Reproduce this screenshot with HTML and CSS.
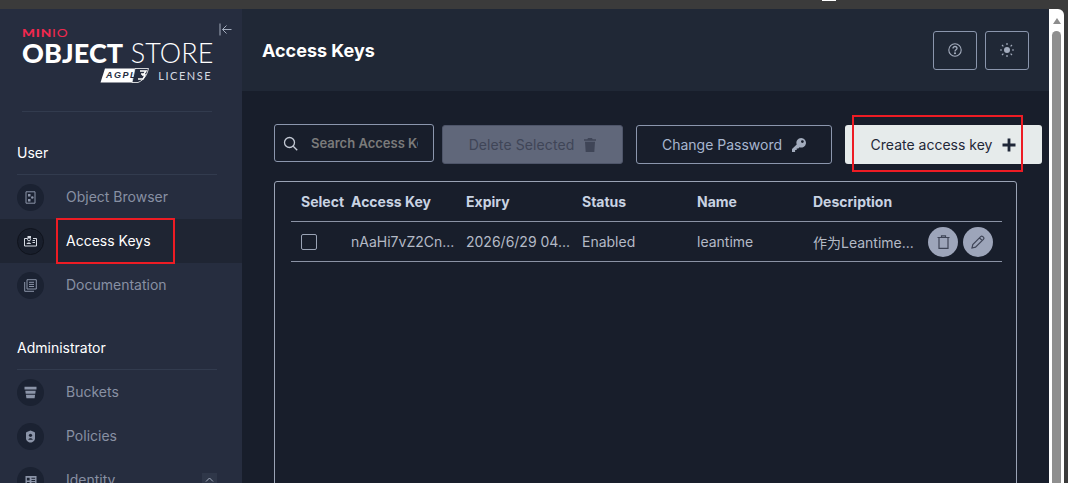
FILE: index.html
```html
<!DOCTYPE html>
<html lang="en">
<head>
<meta charset="utf-8">
<title>Access Keys</title>
<link rel="stylesheet" href="styles.css">
</head>
<body>
<div class="topstrip"><span class="tab-mark"></span></div>
<div class="window">
  <div class="app">
    <aside class="sidebar">
      <div class="brand">
        <svg class="collapse" width="13" height="13" viewBox="0 0 13 13" fill="none" stroke="#a3acbd" stroke-width="1"><path d="M1 .5v12M12.500 6.500H3.500M7.500 2.500l-4 4 4 4"/></svg>
        <div class="minio"><b>MIN</b><span>IO</span></div>
        <div class="product"><b>OBJECT</b> STORE</div>
        <div class="license">
          <svg class="agpl" width="49" height="15" viewBox="0 0 49 15">
            <path d="M5 .5H35L32 14.500H.5Z" fill="#fff"/>
            <path d="M35 .5H48.500C47 7 44 12 38 14.500H32Z" fill="#262d3f" stroke="#fff" stroke-width=".8"/>
            <text x="6" y="10" class="agpl-text">AGPL</text>
            <path d="M40 3h6l-2 3h-3M42 7h3l-2 4h-5" fill="none" stroke="#fff" stroke-width="1.500"/>
          </svg>
          <span>LICENSE</span>
        </div>
      </div>

      <div class="section-title">User</div>
      <nav class="menu">
        <a class="item">
          <span class="disc"><svg width="13" height="13" viewBox="0 0 13 13" fill="none"><path d="M2 .8h9v11.400H2z" stroke="#8b94a8"/><rect x="4" y="3" width="2.500" height="2.500" fill="#8b94a8"/><circle cx="8.300" cy="6.500" r="1.300" fill="#8b94a8"/><rect x="4" y="8" width="2.500" height="2.500" fill="#8b94a8"/></svg></span>
          <span class="label">Object Browser</span>
        </a>
        <a class="item active">
          <span class="disc"><svg width="13" height="12" viewBox="0 0 13 12" fill="none"><path d="M.5 3.500h3M9 3.500h3.500v7.500H.5V3.500" stroke="#d5dae3"/><circle cx="5" cy="4.300" r="1.500" stroke="#d5dae3"/><rect x="3.500" y="1" width="3.500" height="2" fill="#d5dae3"/><path d="M2.500 9c.2-2 4.300-2 4.500 0z" fill="#d5dae3"/><path d="M8.500 5.500h2.500M8.500 7.500h2.500" stroke="#d5dae3"/></svg></span>
          <span class="label">Access Keys</span>
        </a>
        <a class="item">
          <span class="disc"><svg width="13" height="13" viewBox="0 0 13 13" fill="none" stroke="#8b94a8"><path d="M3 .7h9.300v9.300H3zM.7 3v9.300H10M5 3.300h5M5 5.400h5M5 7.500h5"/></svg></span>
          <span class="label">Documentation</span>
        </a>
      </nav>

      <div class="section-title admin">Administrator</div>
      <nav class="menu">
        <a class="item">
          <span class="disc"><svg width="13" height="13" viewBox="0 0 13 13" fill="#8b94a8"><path d="M.5.800h12v2.700H.5zM1.300 4.700h10.400l-.4 3H1.700zM1.900 8.800h9.200l-.5 3.400H2.400z"/></svg></span>
          <span class="label">Buckets</span>
        </a>
        <a class="item">
          <span class="disc"><svg width="11" height="13" viewBox="0 0 11 13"><path d="M3 1.500l2.500-1 2.500 1 2 1v6c0 2.300-2.400 4-4.500 4S1 10.800 1 8.500v-6z" fill="#8b94a8"/><circle cx="5.500" cy="5.300" r="1.600" fill="#1b2232"/><path d="M3.300 9.800c.3-2 4.100-2 4.400 0z" fill="#1b2232"/></svg></span>
          <span class="label">Policies</span>
        </a>
        <a class="item">
          <span class="disc"><svg width="12" height="11" viewBox="0 0 13 12" fill="#8b94a8"><path d="M.5 1h12v11H.5zM2 6h3V3H2zm5-3v1.200h4V3zm0 2.400v1.200h4V5.400zM2 7.500V10h3V7.500zm5 .4V10h4V7.900z" fill-rule="evenodd"/></svg></span>
          <span class="label grow">Identity</span>
          <span class="caret"><svg width="9" height="5" viewBox="0 0 9 5" fill="none" stroke="#a3acbd"><path d="M1 4.500l3.500-3.500 3.500 3.500"/></svg></span>
        </a>
      </nav>
    </aside>

    <main class="main">
      <header class="page-header">
        <h1>Access Keys</h1>
        <div class="header-actions">
          <button class="icon-btn"><svg width="14" height="14" viewBox="0 0 14 14" fill="none" stroke="#a3acbd" stroke-width="1.100"><circle cx="7" cy="7" r="6.200"/><path d="M5 5.400C5 2.800 9 3 9 5.300c0 1.500-2 1.600-2 3.200" stroke-width="1.300"/><circle cx="7" cy="10.300" r=".5" fill="#a3acbd"/></svg></button>
          <button class="icon-btn"><svg width="14" height="14" viewBox="0 0 14 14" fill="#a3acbd" stroke="#a3acbd"><circle cx="7" cy="7" r="3" stroke="none"/><path d="M7 0v2M7 12v2M0 7h2M12 7h2M2 2l1.400 1.400M10.600 10.600L12 12M2 12l1.400-1.400M10.600 3.400L12 2" stroke-width="1.200"/></svg></button>
        </div>
      </header>

      <section class="content">
        <div class="toolbar">
          <label class="search">
            <svg width="15" height="15" viewBox="0 0 15 15" fill="none" stroke="#c3c9d4" stroke-width="1.300"><circle cx="6.500" cy="6.500" r="5"/><path d="M10.200 10.200l4 4"/></svg>
            <input type="text" placeholder="Search Access Keys">
          </label>
          <button class="btn btn-disabled">Delete Selected
            <svg width="12" height="14" viewBox="0 0 12 14" fill="#3f4557"><path d="M4 0h4l.6 1.200H12v1.500H0V1.200h3.400zM1 3.700h10l-.7 10.300H1.700z"/></svg>
          </button>
          <button class="btn btn-outline">Change Password
            <svg width="14" height="14" viewBox="0 0 14 14" fill="#a3acbd"><path d="M9.200 0a4.800 4.800 0 1 1-1.700 9.300L6.300 10.500H4.700v1.600H3.100V14H0v-2.900l4.700-4.600A4.800 4.800 0 0 1 9.200 0zm1.200 2.200a1.400 1.400 0 1 0 0 2.800 1.400 1.400 0 0 0 0-2.800z" fill-rule="evenodd"/></svg>
          </button>
          <button class="btn btn-primary">Create access key
            <svg width="14" height="14" viewBox="0 0 14 14" stroke="#1f2738" stroke-width="2.800"><path d="M7 .5v13M.5 7h13"/></svg>
          </button>
        </div>

        <div class="table-box">
          <div class="row head">
            <div>Select</div><div>Access Key</div><div>Expiry</div><div>Status</div><div>Name</div><div>Description</div>
          </div>
          <div class="row body">
            <div><span class="check"></span></div>
            <div>nAaHi7vZ2Cn...</div>
            <div>2026/6/29 04...</div>
            <div>Enabled</div>
            <div>leantime</div>
            <div>作为Leantime...</div>
            <div class="actions">
              <button class="round"><svg width="13" height="14" viewBox="0 0 13 14" fill="none" stroke="#3f4557" stroke-width="1.200"><path d="M.5 2.500h12M4.500 2.500V.8h4v1.700M2 2.500v10.800h9V2.500"/></svg></button>
              <button class="round"><svg width="14" height="14" viewBox="0 0 14 14" fill="none" stroke="#3f4557" stroke-width="1.200"><path d="M1 13l.8-3.500L9.700 1.600a1.500 1.500 0 0 1 2.100 0l.6.600a1.500 1.500 0 0 1 0 2.100L4.500 12.200zM8.500 2.800l2.700 2.700"/></svg></button>
            </div>
          </div>
        </div>
      </section>
    </main>
  </div>
  <div class="scrollbar"><span class="arrow"></span><span class="thumb"></span></div>
</div>
<div class="callout callout-menu"></div>
<div class="callout callout-create"></div>
</body>
</html>
```
FILE: styles.css
```css
* { box-sizing: border-box; }
html, body { height: 100%; }
body {
  margin: 0;
  background: #3b3b3b;
  font-family: "Inter", "Noto Sans CJK SC", sans-serif;
  font-size: 14px;
  overflow: hidden;
  position: relative;
}
.topstrip { height: 9px; background: #3b3b3b; }
.tab-mark { display: block; width: 14px; height: 1px; margin-left: 822px; background: #fff; }
.window { display: flex; height: 474px; padding-right: 4px; overflow: hidden; }
.app { display: flex; width: 1049px; overflow: hidden; }

.sidebar { width: 242px; flex: none; background: #262d3f; color: #fff; }
.brand {
  position: relative;
  height: 103px;
  margin: 0 30px 0 22px;
  padding-top: 20px;
  border-bottom: 1px solid #323b4e;
}
.collapse { position: absolute; left: 197px; top: 14px; }
.minio { font-family: "Lato", sans-serif; font-size: 10.500px; line-height: 9px; letter-spacing: .6px; color: #f0294f; transform-origin: left; transform: scaleX(1.300); }
.minio b { font-weight: 900; }
.minio span { font-weight: 400; }
.product { font-family: "Lato", sans-serif; font-size: 27px; line-height: 24px; margin-top: 3px; white-space: nowrap; font-weight: 300; letter-spacing: .1px; }
.product b { font-weight: 900; }
.license { display: flex; align-items: center; justify-content: flex-end; gap: 9px; margin-top: 3px; font-family: "Lato", sans-serif; font-size: 11px; letter-spacing: 1.500px; color: #d6dae2; }
.agpl-text { font: italic 900 9px "Liberation Sans", sans-serif; fill: #262d3f; }

.section-title { margin: 31px 25px 0 17px; padding-bottom: 12px; line-height: 20px; height: 32px; border-bottom: 1px solid #323b4e; font-weight: 400; }
.section-title.admin { margin-top: 31px; }
.menu { display: flex; flex-direction: column; }
.item { display: flex; align-items: center; height: 44px; padding: 0 25px 0 17px; color: #8890a3; }
.item .label { margin-top: -2px; }
.item .grow { flex: 1; }
.item.active { background: #1f2533; color: #fff; }
.disc { width: 27px; height: 27px; flex: none; margin-right: 22px; border-radius: 50%; background: #1b2232; display: flex; align-items: center; justify-content: center; }
.item.active .disc { background: #181e2b; border: 1px solid #0f131c; }
.caret { width: 15px; height: 15px; background: #2f3749; display: flex; align-items: flex-start; justify-content: center; padding-top: 4px; }

.main { flex: 1; min-width: 0; background: #181e2b; }
.page-header { height: 82px; background: #202836; display: flex; align-items: center; justify-content: space-between; padding: 0 20px 0 20px; }
h1 { margin: 0; font-size: 18px; line-height: 24px; font-weight: 700; color: #fff; position: relative; top: 1px; }
.header-actions { display: flex; gap: 8px; }
button { font: inherit; padding: 0; cursor: pointer; }
.icon-btn { width: 44px; height: 39px; background: transparent; border: 1px solid #8b96ad; border-radius: 3px; display: flex; align-items: center; justify-content: center; }

.content { padding: 33px 7px 0 32px; }
.toolbar { display: flex; align-items: flex-start; }
.search { width: 160px; height: 38px; border: 1px solid #8b96ad; border-radius: 3px; display: flex; align-items: center; padding: 0 15px 0 8px; gap: 13px; }
.search svg { flex: none; }
.search input { flex: 1; min-width: 0; width: 0; background: transparent; border: 0; outline: 0; padding: 0; font: 600 13px "Inter", sans-serif; color: #ccc; }
.search input::placeholder { color: #7b7b7b; opacity: 1; }
.btn { height: 39px; margin-top: 1px; display: flex; align-items: center; justify-content: center; gap: 10px; border-radius: 3px; border: 1px solid transparent; }
.btn-disabled { width: 181px; margin-left: 8px; background: #60677a; border-color: #4e5569; color: #3f4557; letter-spacing: .1px; }
.btn-outline { width: 196px; margin-left: 13px; background: transparent; border-color: #8b96ad; color: #a7b6d0; }
.btn-primary { width: 197px; margin-left: 13px; background: #e6ebeb; color: #1f2738; }

.table-box { margin-top: 17px; width: 743px; height: 400px; border: 1px solid #9aa3b5; border-radius: 3px; padding: 0 14px 0 16px; }
.row { display: grid; grid-template-columns: 50px 115px 116px 115px 116px 115px 1fr; align-items: center; height: 40px; padding-left: 10px; border-bottom: 1px solid #8b93a5; white-space: nowrap; }
.head { font-weight: 700; color: #c9d3e2; }
.body { color: #b4bac6; }
.check { display: block; width: 16px; height: 16px; border: 1px solid #9aa3b5; border-radius: 2px; }
.actions { display: flex; gap: 5px; }
.round { width: 30px; height: 30px; flex: none; border: 0; border-radius: 50%; background: #9da5ba; display: flex; align-items: center; justify-content: center; }

.scrollbar { width: 15px; flex: none; background: #fff; border-top-right-radius: 6px; padding: 0 3px; display: flex; flex-direction: column; align-items: center; }
.arrow { margin-top: 9px; border: 4.500px solid transparent; border-top: 0; border-bottom: 6px solid #8c8c8c; }
.thumb { display: block; width: 9px; flex: 1; margin-top: 7px; border-radius: 5px 5px 0 0; background: #8f8f8f; }

.callout { position: absolute; border: 2px solid #ed1c24; pointer-events: none; }
.callout-menu { left: 56px; top: 218px; width: 119px; height: 46px; }
.callout-create { left: 852px; top: 115px; width: 171px; height: 57px; }
```
